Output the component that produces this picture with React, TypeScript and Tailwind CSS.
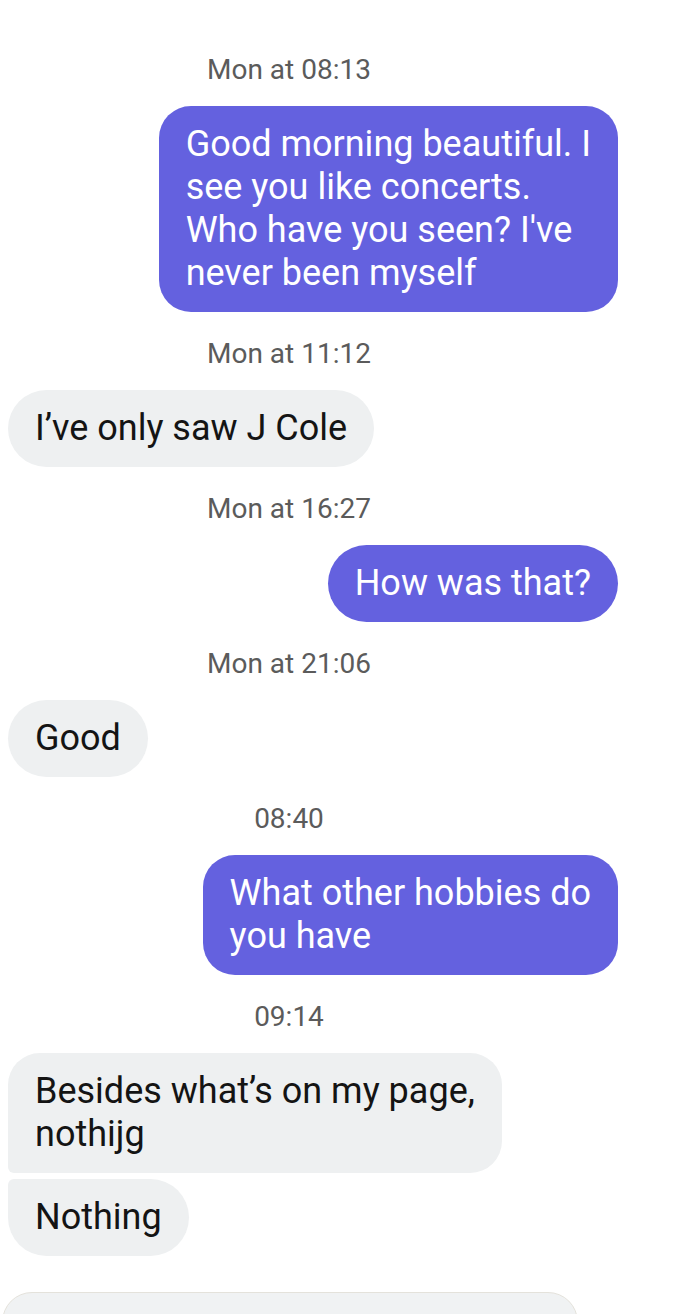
import type { ReactNode } from "react";

type Side = "me" | "them";

interface BubbleProps {
  side: Side;
  lines: string[];
  className?: string;
}

/** Centered date/time label between message groups. */
function Stamp({ children, first }: { children: ReactNode; first?: boolean }) {
  return (
    <div
      className={`${first ? "mt-[56px]" : "mt-[28px]"} mb-[22px] h-[28px] w-[578px] text-center text-[28px] leading-[28px] text-[#5b5b5b]`}
    >
      {children}
    </div>
  );
}

function Bubble({ side, lines, className = "" }: BubbleProps) {
  const multi = lines.length > 1;
  const tone =
    side === "me"
      ? "self-end mr-[82px] bg-[#6461df] text-white"
      : "self-start ml-[8px] bg-[#eef0f1] text-[#141414]";
  return (
    <div
      className={`${tone} ${multi ? "rounded-[32px]" : "rounded-[39px]"} px-[27px] py-[17px] text-[36px] leading-[43px] whitespace-nowrap ${className}`}
    >
      {lines.map((line, i) => (
        <div key={i}>{line}</div>
      ))}
    </div>
  );
}

export default function App() {
  return (
    <div
      className="relative flex h-[1314px] w-[700px] flex-col overflow-hidden bg-white"
      style={{ fontFamily: "Roboto, 'Noto Sans', sans-serif" }}
    >
      <Stamp first>Mon at 08:13</Stamp>
      <Bubble
        side="me"
        lines={[
          "Good morning beautiful. I",
          "see you like concerts.",
          "Who have you seen? I've",
          "never been myself",
        ]}
      />

      <Stamp>Mon at 11:12</Stamp>
      <Bubble side="them" lines={["I’ve only saw J Cole"]} />

      <Stamp>Mon at 16:27</Stamp>
      <Bubble side="me" lines={["How was that?"]} />

      <Stamp>Mon at 21:06</Stamp>
      <Bubble side="them" lines={["Good"]} />

      <Stamp>08:40</Stamp>
      <Bubble side="me" lines={["What other hobbies do", "you have"]} />

      <Stamp>09:14</Stamp>
      <Bubble
        side="them"
        lines={["Besides what’s on my page,", "nothijg"]}
        className="rounded-bl-[6px]"
      />
      <Bubble
        side="them"
        lines={["Nothing"]}
        className="mt-[6px] rounded-tl-[6px]"
      />

      <div className="mt-[36px] ml-[2px] h-[60px] w-[576px] shrink-0 rounded-t-[30px] border border-[#e4e2db] bg-[#f0f2f3]" />
    </div>
  );
}
